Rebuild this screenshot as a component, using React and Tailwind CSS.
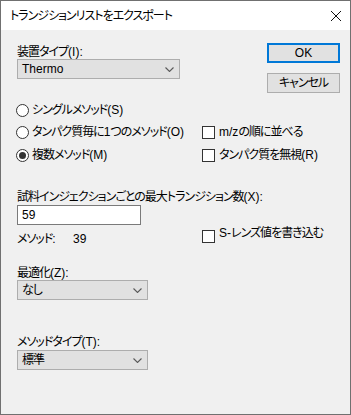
import React from 'react';

// latin runs keep normal spacing, kana/kanji runs are tightened
const L = ({ children }) => <span className="tracking-normal">{children}</span>;

const Chevron = () => (
  <svg width="9" height="5" viewBox="0 0 9 5" className="shrink-0">
    <path d="M0.5 0.5 L4.5 4.5 L8.5 0.5" fill="none" stroke="#5a5a5a" strokeWidth="1.1" />
  </svg>
);

const Select = ({ children, width }) => (
  <div
    className={`flex items-center justify-between h-[20px] bg-[#e1e1e1] border border-[#adadad] pl-[4px] pr-[5px] ${width}`}
  >
    <span className="leading-[14px]">{children}</span>
    <Chevron />
  </div>
);

const Radio = ({ checked, children }) => (
  <div className="flex items-center gap-[3px] -ml-[1px]">
    <span className="flex items-center justify-center w-[13px] h-[13px] rounded-full border border-[#333333] bg-white">
      {checked && <span className="w-[7px] h-[7px] rounded-full bg-[#333333]" />}
    </span>
    <span className="leading-[14px]">{children}</span>
  </div>
);

const Checkbox = ({ children }) => (
  <div className="flex items-center gap-[4px]">
    <span className="w-[13px] h-[13px] border border-[#333333] bg-white shrink-0" />
    <span className="leading-[14px]">{children}</span>
  </div>
);

const App = () => {
  return (
    <div className="w-[351px] h-[415px] border border-[#707070] bg-[#f0f0f0] flex flex-col text-[12px] text-black tracking-[-1px] [font-family:'Liberation_Sans','Noto_Sans_CJK_JP',sans-serif] [font-feature-settings:'palt']">
      <div className="h-[29px] bg-white flex items-center justify-between pl-[9px] pr-[9px] shrink-0">
        <span className="leading-[14px]">トランジションリストをエクスポート</span>
        <svg width="10" height="10" viewBox="0 0 10 10">
          <path d="M0 0 L10 10 M10 0 L0 10" stroke="#111111" strokeWidth="1" />
        </svg>
      </div>

      <div className="flex-1 pl-[16px] pr-[10px] pt-[13px]">
        <div className="flex justify-between">
          <div className="pt-[2px] flex flex-col">
            <span className="leading-[14px]">
              装置タイプ<L>(I):</L>
            </span>
            <Select width="w-[163px]">
              <L>Thermo</L>
            </Select>
          </div>
          <div className="flex flex-col gap-[10px]">
            <button className="w-[73px] h-[20px] bg-[#e1e1e1] border-2 border-[#0078d7] leading-[14px] tracking-normal">
              OK
            </button>
            <button className="w-[73px] h-[20px] bg-[#e1e1e1] border border-[#adadad] leading-[14px]">
              キャンセル
            </button>
          </div>
        </div>

        <div className="grid grid-cols-[185px_1fr] mt-[6px]">
          <div className="h-[22px] flex items-center">
            <Radio>
              シングルメソッド<L>(S)</L>
            </Radio>
          </div>
          <div />
          <div className="h-[22px] flex items-center">
            <Radio>
              タンパク質毎に<L>1</L>つのメソッド<L>(O)</L>
            </Radio>
          </div>
          <div className="h-[22px] flex items-center">
            <Checkbox>
              <L>m/z</L>の順に並べる
            </Checkbox>
          </div>
          <div className="h-[22px] mt-[1px] flex items-center">
            <Radio checked>
              複数メソッド<L>(M)</L>
            </Radio>
          </div>
          <div className="h-[22px] mt-[1px] flex items-center">
            <Checkbox>
              タンパク質を無視<L>(R)</L>
            </Checkbox>
          </div>
        </div>

        <div className="mt-[24px] leading-[14px]">
          試料インジェクションごとの最大トランジション数<L>(X):</L>
        </div>
        <div className="mt-[1px] w-[124px] h-[20px] bg-white border border-[#7a7a7a] pl-[4px] flex items-center">
          <span className="leading-[14px] tracking-normal">59</span>
        </div>

        <div className="grid grid-cols-[185px_1fr] mt-[5px]">
          <div className="flex pt-[2px] leading-[14px]">
            <span className="w-[56px]">
              メソッド<L>:</L>
            </span>
            <L>39</L>
          </div>
          <div className="flex items-start gap-[4px]">
            <span className="w-[13px] h-[13px] border border-[#333333] bg-white shrink-0" />
            <span className="leading-[14px] -mt-[4px]">
              <L>S-</L>レンズ値を書き込む
            </span>
          </div>
        </div>

        <div className="mt-[20px] leading-[14px]">
          最適化<L>(Z):</L>
        </div>
        <Select width="w-[131px]">なし</Select>

        <div className="mt-[35px] leading-[14px]">
          メソッドタイプ<L>(T):</L>
        </div>
        <div className="mt-[1px]">
          <Select width="w-[131px]">標準</Select>
        </div>
      </div>
    </div>
  );
};

export default App;
